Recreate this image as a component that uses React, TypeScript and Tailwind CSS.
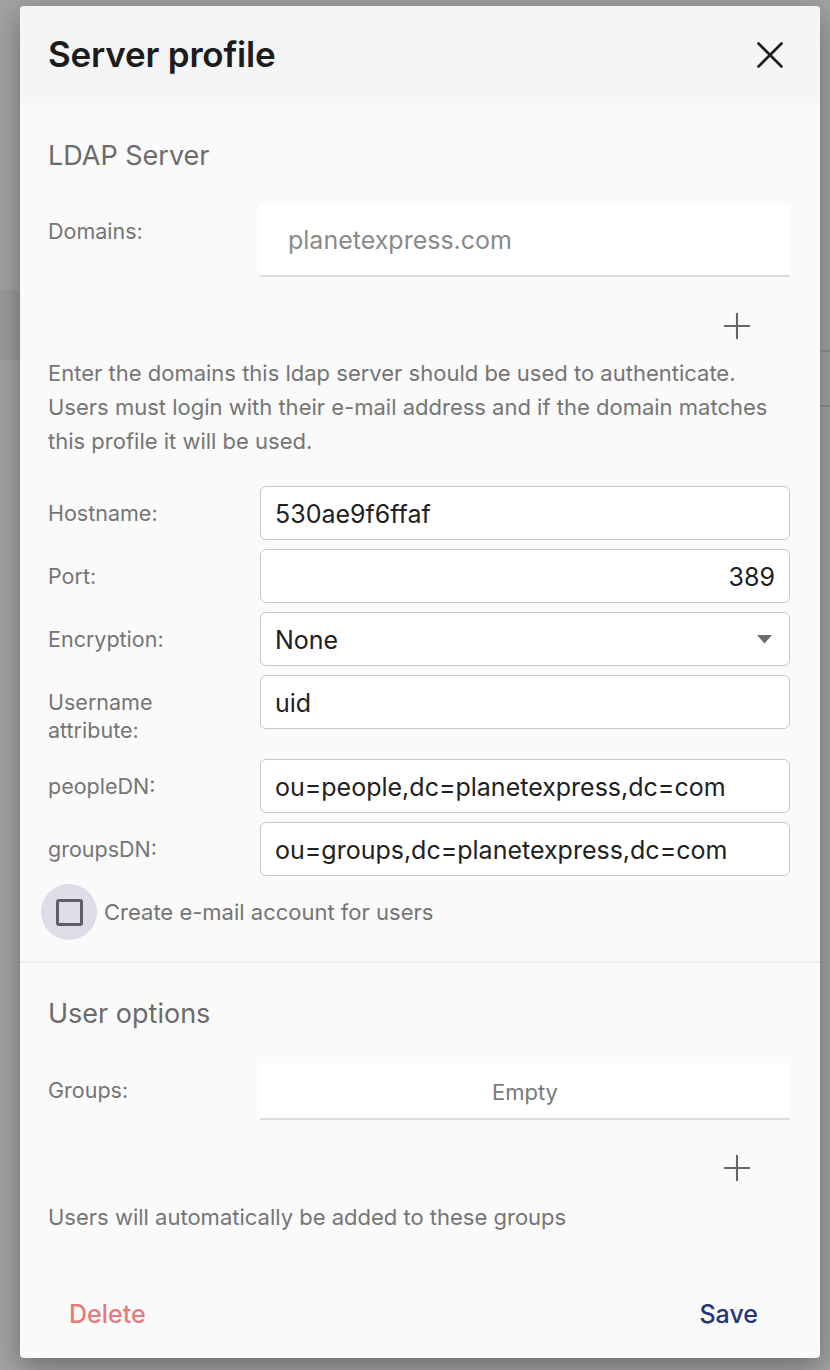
import { X, Plus } from "lucide-react";

const labelCls = "w-[212px] shrink-0 pt-[13px] pb-[6px] text-[21.5px] leading-[28px] text-[#757575]";
const inputCls =
  "flex h-[54px] flex-1 items-center rounded-[6px] border border-[#c6c6c6] bg-white px-[14px] pt-[4px] text-[25px] text-[#212121]";

const Field = ({ label, children }: { label: React.ReactNode; children: React.ReactNode }) => (
  <div className="flex items-start">
    <div className={labelCls}>{label}</div>
    {children}
  </div>
);

const AddButton = () => (
  <div className="flex justify-end pr-[29px]">
    <button className="flex h-[48px] w-[48px] items-center justify-center text-[#666666]">
      <Plus size={42} strokeWidth={1.2} />
    </button>
  </div>
);

export default function App() {
  return (
    <div
      className="relative min-h-[1370px] w-full overflow-hidden bg-[#a3a3a3] pt-[6px]"
      style={{ fontFamily: "Inter, 'Noto Sans', sans-serif" }}
    >
      {/* page behind the overlay */}
      <div className="absolute left-0 top-[290px] h-[70px] w-[20px] bg-[#9b9b9b]" />
      <div className="absolute right-0 top-[350px] h-[2px] w-[10px] bg-[#8e8e8e]" />
      <div className="absolute right-0 top-[405px] h-[2px] w-[10px] bg-[#8e8e8e]" />

      <div className="relative ml-[20px] mr-[10px] h-[1352px] overflow-hidden rounded-[4px] bg-[#fafafa] shadow-[0_8px_30px_rgba(0,0,0,0.35)]">
        <div className="flex h-[97px] items-center justify-between bg-[#f5f5f5] pl-[28px] pr-[27px]">
          <h1 className="text-[35px] font-semibold tracking-[-0.2px] text-[#1c1c1c]">Server profile</h1>
          <X size={46} strokeWidth={1.4} className="text-[#1f1f1f]" />
        </div>

        <div className="pl-[28px] pr-[30px] pt-[37px]">
          <h2 className="text-[27px] leading-[31px] text-[#6b6b6b]">LDAP Server</h2>

          <div className="mt-[33px] flex items-start">
            <div className={labelCls}>Domains:</div>
            <div className="flex h-[73px] flex-1 items-center border-b-2 border-[#dedede] bg-white pl-[28px] pt-[2px] text-[25px] text-[#8a8a8a]">
              planetexpress.com
            </div>
          </div>
          <div className="mt-[25px]">
            <AddButton />
          </div>
          <p className="mt-[6px] text-[22px] leading-[34px] text-[#757575]">
            Enter the domains this ldap server should be used to authenticate. Users must login with their e-mail
            address and if the domain matches this profile it will be used.
          </p>

          <div className="mt-[28px] flex flex-col gap-[9px]">
            <Field label="Hostname:">
              <div className={inputCls}>530ae9f6ffaf</div>
            </Field>
            <Field label="Port:">
              <div className={inputCls + " justify-end"}>389</div>
            </Field>
            <Field label="Encryption:">
              <div className={inputCls + " justify-between"}>
                <span>None</span>
                <svg width="15" height="9" viewBox="0 0 15 9" className="mr-[3px] -mt-[4px]">
                  <path d="M0 0 L15 0 L7.5 8.5 Z" fill="#6b6b6b" />
                </svg>
              </div>
            </Field>
            <Field
              label={
                <>
                  Username
                  <br />
                  attribute:
                </>
              }
            >
              <div className={inputCls}>uid</div>
            </Field>
            <Field label="peopleDN:">
              <div className={inputCls}>ou=people,dc=planetexpress,dc=com</div>
            </Field>
            <Field label="groupsDN:">
              <div className={inputCls}>ou=groups,dc=planetexpress,dc=com</div>
            </Field>
          </div>

          <label className="-ml-[7px] mt-[8px] flex items-center gap-[7px]">
            <span className="flex h-[56px] w-[56px] items-center justify-center rounded-full bg-[#dcdde8]">
              <span className="h-[27px] w-[27px] rounded-[3px] border-[3px] border-[#5e5e66]" />
            </span>
            <span className="text-[22px] text-[#757575]">Create e-mail account for users</span>
          </label>
        </div>

        <div className="mt-[21px] h-[2px] bg-[#efefef]" />

        <div className="pl-[28px] pr-[30px] pt-[35px]">
          <h2 className="text-[27px] leading-[31px] text-[#6b6b6b]">User options</h2>
          <div className="mt-[34px] flex items-start">
            <div className={labelCls}>Groups:</div>
            <div className="flex h-[57px] flex-1 items-center justify-center border-b-2 border-[#dedede] bg-white pt-[3px] text-[22px] text-[#7a7a7a]">
              Empty
            </div>
          </div>
          <div className="mt-[24px]">
            <AddButton />
          </div>
          <p className="mt-[8px] text-[22px] leading-[34px] text-[#757575]">
            Users will automatically be added to these groups
          </p>
        </div>

        <div className="mt-[54px] flex items-center justify-between pl-[29px] pr-[42px]">
          <button className="px-[20px] py-[8px] text-[25px] font-medium text-[#e57b7b]">Delete</button>
          <button className="px-[20px] py-[8px] text-[25px] font-medium text-[#26347c]">Save</button>
        </div>
      </div>
    </div>
  );
}
